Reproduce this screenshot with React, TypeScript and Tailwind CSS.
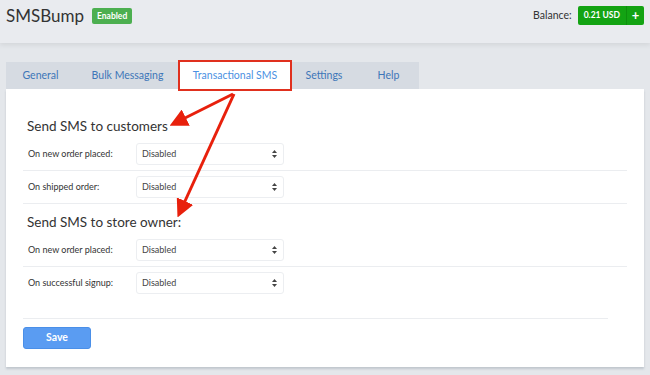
import React from "react";

const font = { fontFamily: "Lato, 'Open Sans', sans-serif" };

function SelectBox() {
  return (
    <div className="flex h-[22px] w-[148px] items-center justify-between rounded-[3px] border border-[#eceef1] bg-white pl-[5px] pr-[6px] text-[9px] text-[#444]">
      <span>Disabled</span>
      <svg width="5" height="8" viewBox="0 0 5 8">
        <path d="M2.5 0 L5 3 L0 3 Z" fill="#444" />
        <path d="M2.5 8 L5 5 L0 5 Z" fill="#444" />
      </svg>
    </div>
  );
}

function Row({ label, last }: { label: string; last?: boolean }) {
  return (
    <div className={`flex items-center py-[5px] ${last ? "" : "border-b border-[#ebedf0]"}`}>
      <div className="w-[113px] pl-[5px] text-[9px] text-[#333]">{label}</div>
      <SelectBox />
    </div>
  );
}

const tabs = [
  { name: "General", w: "w-[69px]" },
  { name: "Bulk Messaging", w: "w-[105px]" },
  { name: "Transactional SMS", w: "w-[110px]" },
  { name: "Settings", w: "w-[68px]" },
  { name: "Help", w: "w-[61px]" },
];

export default function App() {
  return (
    <div className="relative h-[375px] w-[650px] overflow-hidden bg-[#e4e7eb]" style={font}>
      {/* header */}
      <header className="flex h-[43px] items-start justify-between bg-[#e9ebef] px-[6px] pt-[5px] shadow-[0_2px_5px_rgba(0,0,0,0.08)]">
        <div className="flex items-center gap-[8px]">
          <span className="text-[17px] leading-[22px] text-[#333]">SMSBump</span>
          <span className="rounded-[2px] bg-[#4caf50] px-[5px] py-[2px] text-[8.5px] font-bold text-white">Enabled</span>
        </div>
        <div className="flex items-center gap-[6px] pt-[1px]">
          <span className="text-[10.5px] text-[#333]">Balance:</span>
          <div className="flex h-[19px] items-stretch rounded-[2px] bg-[#13a313] text-white">
            <span className="flex items-center px-[6px] text-[8.5px] font-bold">0.21 USD</span>
            <span className="flex w-[18px] items-center justify-center border-l border-[#0e8f0e] text-[13px] font-bold">+</span>
          </div>
        </div>
      </header>

      {/* tabs */}
      <div className="px-[6px] pt-[19px]">
        <div className="flex h-[27px] w-[413px] items-stretch bg-[#d6dbe2] text-[10.5px] text-[#3d76b8]">
          {tabs.map((t) => (
            <div
              key={t.name}
              className={`flex shrink-0 items-center justify-center whitespace-nowrap ${t.w} ${
                t.name === "Transactional SMS"
                  ? "bg-white text-[#4a90e2] outline-2 outline-[#e0301e]"
                  : ""
              }`}
            >
              {t.name}
            </div>
          ))}
        </div>

        {/* card */}
        <div className="h-[278px] w-[638px] bg-white px-[17px] pt-[28px] shadow-[0_2px_2px_rgba(150,160,170,0.45)]">
          <h2 className="pl-[4px] text-[13.5px] leading-[18px] text-[#333]">Send SMS to customers</h2>
          <div className="mt-[3px] w-[604px]">
            <Row label="On new order placed:" />
            <Row label="On shipped order:" />
          </div>
          <h2 className="mt-[9px] pl-[4px] text-[13.5px] leading-[18px] text-[#333]">Send SMS to store owner:</h2>
          <div className="mt-[3px] w-[604px]">
            <Row label="On new order placed:" />
            <Row label="On successful signup:" last />
          </div>
          <div className="mt-[19px] w-[585px] border-t border-[#ebedf0] pt-[8px]">
            <button className="block h-[22px] w-[68px] rounded-[3px] border border-[#4a8fe8] bg-[#5a9cf2] text-[10.5px] font-bold text-white">
              Save
            </button>
          </div>
        </div>
      </div>

      {/* annotation arrows */}
      <svg className="pointer-events-none absolute left-0 top-0" width="650" height="375">
        <defs>
          <marker id="ah" markerWidth="6" markerHeight="6" refX="4" refY="3" orient="auto" markerUnits="strokeWidth">
            <path d="M0 0 L6 3 L0 6 Z" fill="#e8200c" />
          </marker>
        </defs>
        <line x1="233" y1="94" x2="175" y2="123" stroke="#e8200c" strokeWidth="3" markerEnd="url(#ah)" />
        <line x1="234" y1="94" x2="180" y2="212" stroke="#e8200c" strokeWidth="3" markerEnd="url(#ah)" />
      </svg>
    </div>
  );
}
